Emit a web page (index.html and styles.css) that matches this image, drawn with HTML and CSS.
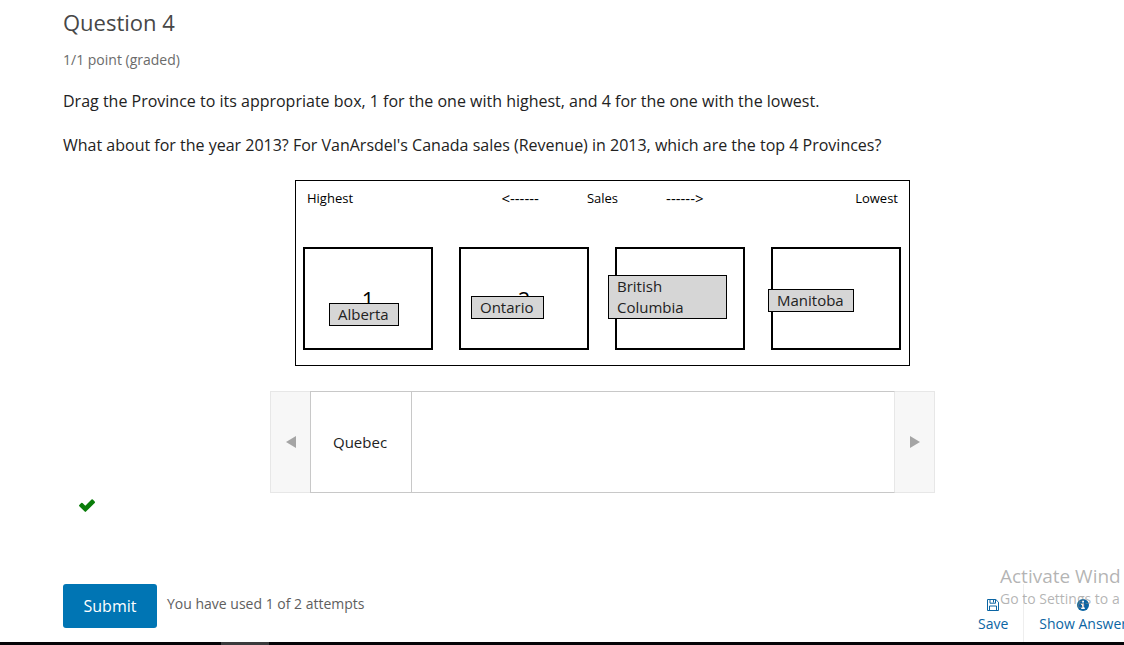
FILE: index.html
```html
<!DOCTYPE html>
<html lang="en">
<head>
<meta charset="utf-8">
<meta name="viewport" content="width=device-width, initial-scale=1">
<title>Question 4</title>
<link rel="stylesheet" href="styles.css">
</head>
<body>
<main class="problem">
  <h1 class="title">Question 4</h1>
  <p class="score">1/1 point (graded)</p>
  <p class="prompt">Drag the Province to its appropriate box, 1 for the one with highest, and 4 for the one with the lowest.</p>
  <p class="prompt">What about for the year 2013? For VanArsdel's Canada sales (Revenue) in 2013, which are the top 4 Provinces?</p>

  <section class="board">
    <div class="scale">
      <span>Highest</span>
      <div class="scale-mid"><span class="scale-arrow">&lt;------</span><span>Sales</span><span class="scale-arrow">------&gt;</span></div>
      <span class="scale-end">Lowest</span>
    </div>
    <div class="targets">
      <div class="target">1<span class="token token-alberta">Alberta</span></div>
      <div class="target">2<span class="token token-ontario">Ontario</span></div>
      <div class="target"><span class="token token-columbia">British Columbia</span></div>
      <div class="target"><span class="token token-manitoba">Manitoba</span></div>
    </div>
  </section>

  <section class="bank">
    <button class="bank-arrow" type="button" aria-label="Previous"><svg width="10" height="12" viewBox="0 0 10 12"><path d="M10 0v12L0 6z"/></svg></button>
    <div class="bank-items"><div class="bank-item">Quebec</div></div>
    <button class="bank-arrow" type="button" aria-label="Next"><svg width="10" height="12" viewBox="0 0 10 12"><path d="M0 0v12l10-6z"/></svg></button>
  </section>

  <svg class="check" width="16" height="13" viewBox="0 0 16 13" role="img" aria-label="Correct"><path d="M15.7 2.6 13.8.6a.9.9 0 0 0-1.3 0L6.3 6.8 3.5 4a.9.9 0 0 0-1.3 0L.3 5.9a.9.9 0 0 0 0 1.3l5.4 5.4a.9.9 0 0 0 1.3 0l8.7-8.7a.9.9 0 0 0 0-1.3z"/></svg>

  <div class="actions">
    <button class="submit" type="button">Submit</button>
    <span class="attempts">You have used 1 of 2 attempts</span>
    <div class="links">
      <button class="link" type="button">
        <svg width="12" height="12" viewBox="0 0 12 12"><path fill="none" stroke="currentColor" d="M.5.5h8.3l2.7 2.7v8.3H.5zM3 .5v3.700h5.500V.5M2.500 11.500V7h7v4.500M6.500 1v2.500"/></svg>
        Save
      </button>
      <button class="link link-answer" type="button">
        <svg width="12" height="12" viewBox="0 0 12 12"><circle cx="6" cy="6" r="6" fill="currentColor"/><path fill="#fff" d="M5 1.800h2v1.700H5zM4.200 4.500H7v4h.8V10H4.200V8.500H5V6h-.8z"/></svg>
        Show Answer
      </button>
    </div>
  </div>
</main>
<aside class="watermark">
  <div class="watermark-title">Activate Wind</div>
  <div>Go to Settings to a</div>
</aside>
<footer class="taskbar"><span class="taskbar-item"></span></footer>
</body>
</html>
```
FILE: styles.css
```css
* { box-sizing: border-box; }

body {
  margin: 0;
  min-height: 100vh;
  display: flex;
  flex-direction: column;
  overflow: hidden;
  background: #fff;
  color: #222;
  font: 16px/24px "Open Sans", sans-serif;
}

button {
  margin: 0;
  padding: 0;
  border: 0;
  background: none;
  color: inherit;
  font: inherit;
}

.problem {
  flex: 1;
  display: flex;
  flex-direction: column;
  margin: 7px -18px 0 63px;
}

.title {
  margin: 0 0 13px;
  color: #474747;
  font-size: 22px;
  font-weight: 400;
  line-height: 30px;
}

.score {
  margin: 0 0 19px;
  color: #6b6b6b;
  font-size: 14px;
  line-height: 20px;
}

.prompt { margin: 0 0 20px; }

.board {
  width: 615px;
  max-width: 100%;
  margin: 3px auto 0;
  padding: 7px 8px 15px 7px;
  border: 1px solid #000;
  color: #000;
}

.scale {
  display: grid;
  grid-template-columns: 1fr auto 1fr;
  padding: 0 3px 0 4px;
  font-size: 13px;
  line-height: 20px;
}

.scale-mid { display: flex; gap: 48px; }
.scale-arrow { font-size: 15px; }
.scale-end { text-align: right; }

.targets {
  display: grid;
  grid-template-columns: repeat(4, 1fr);
  gap: 26px;
  margin-top: 39px;
}

.target {
  position: relative;
  height: 103px;
  display: flex;
  align-items: center;
  justify-content: center;
  border: 2px solid #000;
  font-size: 22px;
}

.token {
  position: absolute;
  padding: 0 9px 0 8px;
  border: 1px solid #000;
  background: #d6d6d6;
  color: #222;
  font-size: 15px;
  line-height: 21px;
}

.token-alberta { left: 24px; top: 54px; }
.token-ontario { left: 10px; top: 47px; }
.token-columbia { left: -9px; top: 26px; width: 119px; }
.token-manitoba { left: -5px; top: 40px; }

.bank {
  width: 665px;
  max-width: 100%;
  margin: 25px auto 0;
  display: flex;
  height: 102px;
}

.bank-arrow {
  width: 40px;
  border: 1px solid #e7e7e7;
  background: #f7f7f7;
  fill: #a5a5a5;
}

.bank-arrow:first-child { border-right: 0; }
.bank-arrow:last-child { border-left: 0; }

.bank-items {
  flex: 1;
  display: flex;
  border: 1px solid #c8c8c8;
  border-right-color: #e7e7e7;
}

.bank-item {
  display: flex;
  align-items: center;
  padding: 0 24px 0 22px;
  border-right: 1px solid #c8c8c8;
  font-size: 15px;
}

.check { margin: 6px 0 0 16px; fill: #0a7d0a; }

.actions {
  display: flex;
  align-items: flex-start;
  margin-top: 72px;
}

.submit {
  width: 94px;
  height: 44px;
  border-radius: 3px;
  background: #0075b4;
  color: #fff;
}

.attempts {
  margin: 10px 0 0 10px;
  color: #5e5e5e;
  font-size: 14px;
  line-height: 20px;
}

.links {
  display: flex;
  margin-left: auto;
  color: #0b65a3;
}

.link {
  display: flex;
  flex-direction: column;
  align-items: center;
  gap: 3px;
  height: 58px;
  padding: 15px 15px 0;
  font-size: 14px;
  line-height: 20px;
  white-space: nowrap;
}

.link-answer { border-left: 1px solid #eee; }

.watermark {
  position: absolute;
  top: 564px;
  right: 0;
  width: 124px;
  color: rgba(130, 130, 130, .6);
  font-size: 14px;
  line-height: 20px;
  white-space: nowrap;
  pointer-events: none;
}

.watermark-title { font-size: 19px; line-height: 25px; }

.taskbar {
  height: 3px;
  padding-left: 221px;
  background: #050508;
}

.taskbar-item { display: block; width: 48px; height: 3px; background: #3a3a3c; }
```
